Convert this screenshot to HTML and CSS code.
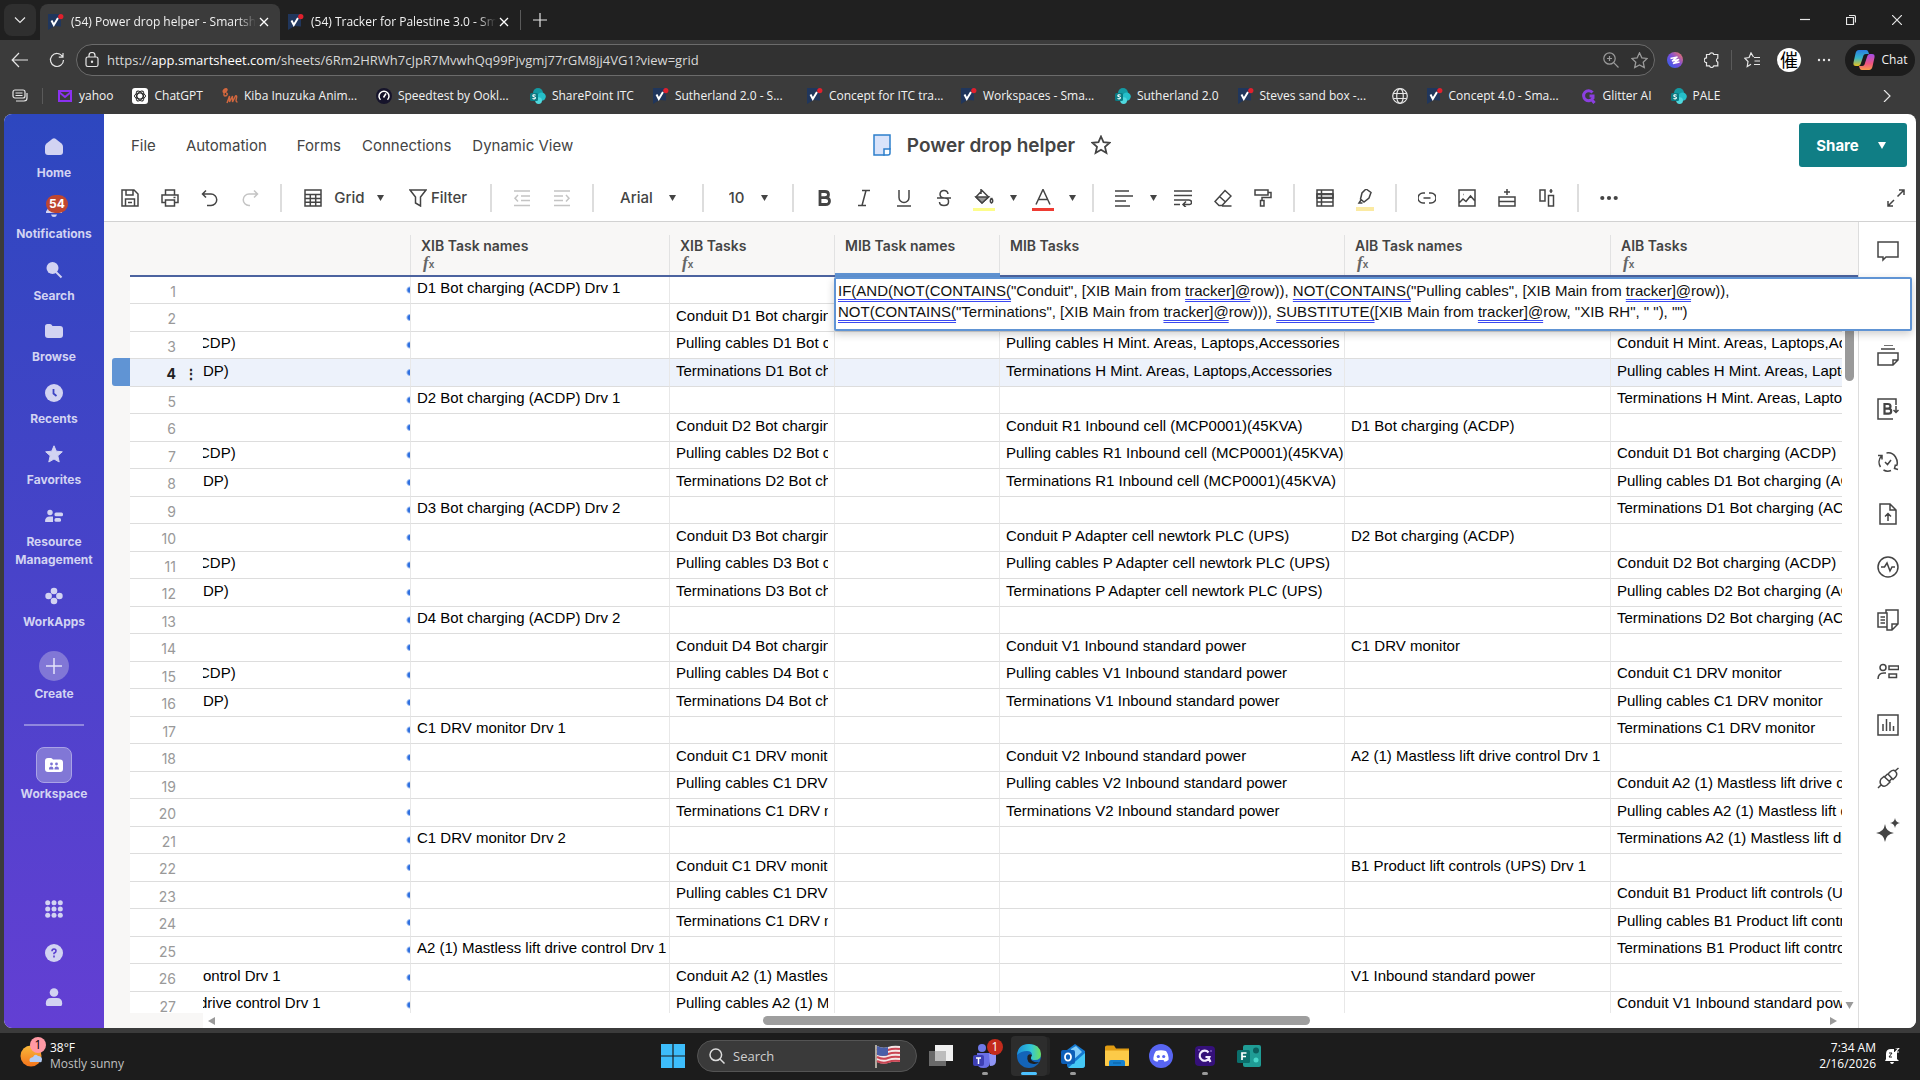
FILE: index.html
```html
<!DOCTYPE html>
<html lang="en">
<head>
    <meta charset="UTF-8">
    <title>(54) Power drop helper - Smartsheet.com</title>
    <link rel="stylesheet" href="styles.css">
</head>
<body>

<!-- shared icons -->
<svg class="defs" width="0" height="0">
    <symbol id="i-smart" viewBox="0 0 16 16">
        <path d="M0 0h13v12.5l-6.5-.5L0 16z" fill="#20365c"/>
        <path d="M3.5 6.5l2.3 4.5L10 4" fill="none" stroke="#fff" stroke-width="2"/>
        <circle cx="12.8" cy="2.6" r="2.6" fill="#e0202c"/>
    </symbol>
    <symbol id="i-sharepoint" viewBox="0 0 16 16">
        <circle cx="8" cy="5" r="5" fill="#149aa3"/>
        <circle cx="11.6" cy="8.6" r="4.2" fill="#25bfc9"/>
        <circle cx="8.6" cy="12.6" r="3.4" fill="#4fd8de"/>
        <rect x="0" y="5" width="8" height="8" rx="1.5" fill="#0b7b83"/>
        <path d="M5.6 7.2c-1-.7-3-.4-2.8.7.2 1 2.700.6 2.700 1.900 0 1.300-2 1.300-3 .6" fill="none" stroke="#fff" stroke-width="1.100"/>
    </symbol>
    <symbol id="i-caret" viewBox="0 0 8 8"><path d="M0 1h8L4 8z" fill="currentColor"/></symbol>
    <symbol id="i-close" viewBox="0 0 12 12"><path d="M2 2l8 8M10 2l-8 8" fill="none" stroke="currentColor" stroke-width="1.300"/></symbol>
</svg>

<header class="browser">
    <div class="tabstrip">
        <button class="tab-menu" aria-label="Tab actions"><svg viewBox="0 0 12 12" width="12" height="12"><path d="M1 3.500l5 5 5-5"/></svg></button>
        <div class="tab active">
            <svg class="fav"><use href="#i-smart"/></svg>
            <span class="tab-title">(54) Power drop helper - Smartshe</span>
            <button aria-label="Close tab"><svg width="12" height="12"><use href="#i-close"/></svg></button>
        </div>
        <div class="tab">
            <svg class="fav"><use href="#i-smart"/></svg>
            <span class="tab-title">(54) Tracker for Palestine 3.0 - Sma</span>
            <button aria-label="Close tab"><svg width="12" height="12"><use href="#i-close"/></svg></button>
        </div>
        <button class="new-tab" aria-label="New tab"><svg viewBox="0 0 14 14" width="14" height="14"><path d="M7 0v14M0 7h14"/></svg></button>
        <div class="win-buttons">
            <button aria-label="Minimize"><svg viewBox="0 0 10 10" width="10" height="10"><path d="M0 4.500h10"/></svg></button>
            <button aria-label="Restore"><svg viewBox="0 0 10 10" width="10" height="10"><path d="M.5 2.500h7v7h-7zM3 .5h5a1.500 1.500 0 0 1 1.500 1.500v5.500"/></svg></button>
            <button aria-label="Close"><svg viewBox="0 0 10 10" width="10" height="10"><path d="M0 0l10 10M10 0L0 10"/></svg></button>
        </div>
    </div>

    <div class="navbar">
        <button aria-label="Back"><svg viewBox="0 0 18 18" width="18" height="18"><path d="M17 9H1.500M8 2L1.200 9 8 16"/></svg></button>
        <button aria-label="Refresh"><svg viewBox="0 0 16 16" width="16" height="16"><path d="M13.500 4.500A6.500 6.500 0 1 0 14.500 8M14 1v4.200H9.800"/></svg></button>
        <div class="address">
            <svg viewBox="0 0 14 16" width="14" height="16"><rect x="1" y="5" width="12" height="9.500" rx="1.800"/><path d="M4 5V3.500a3 3 0 0 1 6 0V5"/><circle cx="7" cy="9.800" r=".6"/></svg>
            <div class="url">https://<b>app.smartsheet.com</b>/sheets/6Rm2HRWh7cJpR7MvwhQq99Pjvgmj77rGM8jj4VG1?view=grid</div>
            <svg class="dim" viewBox="0 0 16 16" width="16" height="16"><circle cx="6.500" cy="6.500" r="5.700"/><path d="M10.700 10.700L15.500 15.500M6.500 4v5M4 6.500h5"/></svg>
            <svg class="dim" viewBox="0 0 16 16" width="17" height="17"><path d="M8 .8l2.200 4.700 5 .6-3.700 3.500 1 5.100L8 12.200l-4.500 2.500 1-5.100L.8 6.100l5-.6z"/></svg>
        </div>
        <button aria-label="Extension"><svg class="noline" viewBox="0 0 16 16" width="16" height="16"><defs><linearGradient id="ext" x1="0" x2="1" y1="1" y2="0"><stop offset="0" stop-color="#2563eb"/><stop offset=".5" stop-color="#7c4ddb"/><stop offset="1" stop-color="#ff7a59"/></linearGradient></defs><circle cx="8" cy="8" r="8" fill="url(#ext)"/><path d="M3.500 6.500L10.500 5 5 9l7-1.500L6 11.500l6.500-1.500" stroke="#fff" stroke-width="1.400"/></svg></button>
        <button class="puzzle" aria-label="Extensions"><svg viewBox="0 0 16 16" width="16" height="16"><path d="M5.500 2.500a2.200 2 0 0 1 4.300 0h4v3.800a2 2 0 0 0 0 3.800v3.800h-4a2.200 2 0 0 1-4.300 0h-3v-3.400a2.200 2.200 0 0 1 0-4.600V2.500z"/></svg></button>
        <button class="favs" aria-label="Favorites"><svg viewBox="0 0 16 16" width="16" height="16"><path d="M9.500 5L7 .9 5.100 5.500.8 6.200 4 9.500l-.8 5L7 12.300M10 5.500h6M10.500 9h5.500M10 12.500h6"/></svg></button>
        <button class="profile" aria-label="Profile"><span>催</span></button>
        <button class="more" aria-label="Settings"><svg class="dots" viewBox="0 0 14 4" width="14" height="4"><circle cx="2" cy="2" r="1.200"/><circle cx="7" cy="2" r="1.200"/><circle cx="12" cy="2" r="1.200"/></svg></button>
        <button class="chat"><svg class="noline" viewBox="0 0 22 20" width="22" height="20"><defs><linearGradient id="cpa" x1="0" x2="0" y1="0" y2="1"><stop offset="0" stop-color="#2a7de1"/><stop offset=".5" stop-color="#37b6c9"/><stop offset="1" stop-color="#e8c11c"/></linearGradient><linearGradient id="cpb" x1="0" x2="0" y1="0" y2="1"><stop offset="0" stop-color="#a34de8"/><stop offset=".6" stop-color="#f0557f"/><stop offset="1" stop-color="#f99b4a"/></linearGradient></defs><path d="M6 0h7c2 0 2.500 2 3 4h-3c-2 0-2.500 1-3 3l-2 6c-.5 2-1.500 3-3 3H3c-2 0-3-1-2.500-3.500l2-9C3 1.500 4 0 6 0z" fill="url(#cpa)"/><path d="M16 20H9c-2 0-2.500-2-3-4h3c2 0 2.500-1 3-3l2-6c.5-2 1.500-3 3-3h2c2 0 3 1 2.500 3.500l-2 9C19 18.500 18 20 16 20z" fill="url(#cpb)"/></svg>Chat</button>
    </div>

    <nav class="bookmarks">
        <button aria-label="Workspaces"><svg viewBox="0 0 16 14" width="16" height="14"><rect x="1" y="1" width="12" height="8" rx="2"/><path d="M3.500 4h7M3.500 6.500h7M15 4v5a3 3 0 0 1-3 3H4"/></svg></button>
        <i></i>
        <a href="#"><svg viewBox="0 0 16 16"><rect x="2" y="3" width="12" height="10" fill="none" stroke="#8b31f0" stroke-width="2"/><path d="M2 4l6 5 6-5" fill="none" stroke="#8b31f0" stroke-width="2"/></svg>yahoo</a>
        <a href="#"><svg viewBox="0 0 16 16"><rect width="16" height="16" rx="3" fill="#fff"/><g fill="none" stroke="#222" stroke-width="1"><ellipse cx="8" cy="8" rx="5.500" ry="3"/><ellipse cx="8" cy="8" rx="5.500" ry="3" transform="rotate(60 8 8)"/><ellipse cx="8" cy="8" rx="5.500" ry="3" transform="rotate(120 8 8)"/></g></svg>ChatGPT</a>
        <a class="long" href="#"><svg viewBox="0 0 16 16"><path d="M5 1C2 0 0 4 2 4.500S6 1 4.500 1 .5 8 3 8s3-3 1-3M5 15l2.500-7v6l3-6v6l3-6c1-.5 1.500 0 1 2s-1 4 1 4" fill="none" stroke="#d2673e" stroke-width="1.400"/></svg>Kiba Inuzuka Anim...</a>
        <a class="long" href="#"><svg viewBox="0 0 16 16"><circle cx="8" cy="8" r="8" fill="#16142b"/><path d="M4.500 11.800a5 5 0 1 1 7 0M7.500 9.500l2.500-4" fill="none" stroke="#fff" stroke-width="1.500"/></svg>Speedtest by Ookl...</a>
        <a href="#"><svg><use href="#i-sharepoint"/></svg>SharePoint ITC</a>
        <a class="long" href="#"><svg><use href="#i-smart"/></svg>Sutherland 2.0 - S...</a>
        <a class="long" href="#"><svg><use href="#i-smart"/></svg>Concept for ITC tra...</a>
        <a class="long" href="#"><svg><use href="#i-smart"/></svg>Workspaces - Sma...</a>
        <a href="#"><svg><use href="#i-sharepoint"/></svg>Sutherland 2.0</a>
        <a class="long" href="#"><svg><use href="#i-smart"/></svg>Steves sand box -...</a>
        <a class="globe" href="#" aria-label="Bookmark"><svg viewBox="0 0 16 16"><g fill="none" stroke="#e6e6e6"><circle cx="8" cy="8" r="7.300"/><ellipse cx="8" cy="8" rx="3.300" ry="7.300"/><path d="M1.500 5.500h13M1.500 10.500h13"/></g></svg></a>
        <a class="long" href="#"><svg><use href="#i-smart"/></svg>Concept 4.0 - Sma...</a>
        <a href="#"><svg viewBox="0 0 16 16"><path d="M11.500 4.500A5 5 0 1 0 12 10V8H8.500M11 12l2.500 3" fill="none" stroke="#8b3fe0" stroke-width="3"/></svg>Glitter AI</a>
        <a href="#"><svg><use href="#i-sharepoint"/></svg>PALE</a>
        <button class="overflow" aria-label="More bookmarks"><svg viewBox="0 0 8 12" width="8" height="12"><path d="M1 0l6 6-6 6"/></svg></button>
    </nav>
</header>

<div class="page">
    <aside class="sidebar">
        <nav class="side-main">
            <a href="#"><svg viewBox="0 0 18 18"><path d="M7.500.8L1.500 5.500Q0 6.800 0 8.500V14q0 3 3 3h12q3 0 3-3V8.500q0-1.700-1.500-3L10.500.8q-1.500-1-3 0z"/></svg>Home</a>
            <a href="#"><svg viewBox="0 0 18 18"><path d="M1 12.500l2-3V5h12v4.500l2 3V14H1zM6 15.500h6q-.5 2.500-3 2.500t-3-2.500z"/></svg><em>54</em>Notifications</a>
            <a href="#"><svg viewBox="0 0 18 18"><circle cx="7.500" cy="7" r="6"/><path d="M11 11l5.500 5.500" stroke="#d2d3f2" stroke-width="2"/></svg>Search</a>
            <a href="#"><svg viewBox="0 0 18 18"><path d="M0 4.500Q0 2 2.500 2H5q1.500 0 2.500 2h7.500q3 0 3 3v6q0 3-3 3H3q-3 0-3-3z"/></svg>Browse</a>
            <a href="#"><svg viewBox="0 0 18 18"><circle cx="9" cy="9" r="9"/><path d="M8.500 5v4.500l3 2.500" fill="none" stroke="#3c43c3" stroke-width="1.800"/></svg>Recents</a>
            <a href="#"><svg viewBox="0 0 18 18"><path d="M9 .8l2.300 5.400 6 .6-4.500 4 1.400 6.200L9 14l-5.200 3 1.400-6.200-4.500-4 6-.6z" stroke="#d2d3f2" stroke-linejoin="round"/></svg>Favorites</a>
        </nav>
        <nav class="side-more">
            <a class="two" href="#"><svg viewBox="0 0 18 18"><circle cx="5" cy="5.500" r="2.700"/><path d="M0 14.500q0-5 5-5h3v5.500H.5z"/><rect x="9.500" y="5.500" width="8.500" height="3.800" rx="1.500"/><rect x="9.500" y="11" width="6.500" height="3.800" rx="1.500"/></svg>Resource Management</a>
            <a href="#"><svg viewBox="0 0 18 18"><circle cx="9" cy="4" r="3.300"/><circle cx="9" cy="14" r="3.300"/><circle cx="3.600" cy="9" r="3.300"/><circle cx="14.400" cy="9" r="3.300"/></svg>WorkApps</a>
            <a class="create" href="#"><span><svg viewBox="0 0 18 18"><path d="M9 1v16M1 9h16" stroke="#e4e4fa" stroke-width="1.500"/></svg></span>Create</a>
        </nav>
        <hr>
        <nav class="side-more">
            <a class="workspace" href="#"><span><svg viewBox="0 0 18 18"><path fill="#fff" d="M0 5q0-3 3-3h3q1 0 2 1.500h7q3 0 3 3V13q0 3-3 3H3q-3 0-3-3z"/><g fill="#7b72d4"><circle cx="6.500" cy="8" r="1.400"/><circle cx="11.500" cy="8" r="1.400"/><path d="M4 13.500v-1q0-2 2.200-2t2.200 2v1zM9.500 13.500v-1q0-2 2.200-2t2.200 2v1z"/></g></svg></span>Workspace</a>
        </nav>
        <nav class="side-bottom">
            <a href="#" aria-label="Launcher"><svg viewBox="0 0 18 18"><g><circle cx="2.700" cy="2.700" r="2.500"/><circle cx="9" cy="2.700" r="2.500"/><circle cx="15.300" cy="2.700" r="2.500"/><circle cx="2.700" cy="9" r="2.500"/><circle cx="9" cy="9" r="2.500"/><circle cx="15.300" cy="9" r="2.500"/><circle cx="2.700" cy="15.300" r="2.500"/><circle cx="9" cy="15.300" r="2.500"/><circle cx="15.300" cy="15.300" r="2.500"/></g></svg></a>
            <a href="#" aria-label="Help"><svg viewBox="0 0 18 18"><circle cx="9" cy="9" r="9"/><path d="M7 7.300q0-2.300 2-2.300t2 2q0 1.300-2 2.300v1M9 11.600v1.800" fill="none" stroke="#5b40cf" stroke-width="1.600"/></svg></a>
            <a href="#" aria-label="Account"><svg viewBox="0 0 18 18"><circle cx="9" cy="4.500" r="4.300"/><path d="M.8 15.500Q.8 10 6 10h6q5.200 0 5.200 5.500 0 2.500-1.500 2.500H2.300Q.8 18 .8 15.500z"/></svg></a>
        </nav>
    </aside>

    <main class="sheet">
        <div class="menubar">
            <nav>
                <button class="wide">File</button>
                <button class="wide">Automation</button>
                <button>Forms</button>
                <button>Connections</button>
                <button>Dynamic View</button>
            </nav>
            <h1>
                <svg viewBox="0 0 18 22" width="18" height="22"><path d="M1 1h16v14l-6 6H1z" fill="#d9e3fa" stroke="#2d7fcb" stroke-width="1.500"/><path d="M17 15h-6v6l4 0q2 0 2-2z" fill="#fff" stroke="#2d7fcb" stroke-width="1.500"/></svg>
                Power drop helper
                <svg class="star" viewBox="0 0 20 20" width="20" height="20"><path d="M10 1.500l2.500 5.700 6.200.6-4.700 4.100 1.400 6.100L10 14.800 4.600 18 6 11.900 1.300 7.800l6.200-.6z"/></svg>
            </h1>
            <button class="share">Share<svg width="8" height="8"><use href="#i-caret"/></svg></button>
        </div>

        <div class="toolbar">
            <button aria-label="Save"><svg viewBox="0 0 18 18"><path d="M1 1h12l4 4v12H1zM4.500 17v-7h9v7M5 1v5h7V1M7 13.500h4"/></svg></button>
            <button aria-label="Print"><svg viewBox="0 0 18 18"><path d="M4.500 6V1h9v5M4 13.500H1V6h16v7.500h-3M4.500 11h9v6h-9zM12.500 8.500h2"/></svg></button>
            <button aria-label="Undo"><svg viewBox="0 0 18 18"><path d="M5 1.500L1.500 5 5 8.500M1.500 5H10a5.500 5.500 0 0 1 0 11.500H6"/></svg></button>
            <button class="off" aria-label="Redo"><svg viewBox="0 0 18 18"><path d="M13 1.500L16.500 5 13 8.500M16.500 5H8a5.500 5.500 0 0 0 0 11.500h1"/></svg></button>
            <i></i>
            <button class="view"><svg viewBox="0 0 18 18"><path d="M1 1h16v16H1zM1 5.500h16M1 9.500h16M1 13.300h16M6.300 5.500V17M11.700 5.500V17"/></svg>Grid<svg class="caret"><use href="#i-caret"/></svg></button>
            <button class="filter"><svg viewBox="0 0 18 18"><path d="M1 1h16l-5.500 7v9L6.500 14V8z"/></svg>Filter</button>
            <i></i>
            <button class="off" aria-label="Outdent"><svg viewBox="0 0 18 18"><path d="M1 2h16M8 7h9M8 11.500h9M1 16.500h16M5 6L2 9.200l3 3.300"/></svg></button>
            <button class="off" aria-label="Indent"><svg viewBox="0 0 18 18"><path d="M1 2h16M1 7h9M1 11.500h9M1 16.500h16M13 6l3 3.200-3 3.300"/></svg></button>
            <i></i>
            <label class="font"><select aria-label="Font"><option>Arial</option></select><svg class="caret"><use href="#i-caret"/></svg></label>
            <i></i>
            <label class="size"><select aria-label="Size"><option>10</option></select><svg class="caret"><use href="#i-caret"/></svg></label>
            <i></i>
            <button aria-label="Bold"><svg viewBox="0 0 18 18"><path stroke-width="2.800" d="M5 2.500h5q3.500 0 3.500 3T10 8.700H5zM5 8.700h5.500q4 0 4 3.400t-4 3.400H5z"/></svg></button>
            <button aria-label="Italic"><svg viewBox="0 0 18 18"><path d="M7 1.500h8M3 16.500h8M11 1.500L7 16.500"/></svg></button>
            <button aria-label="Underline"><svg viewBox="0 0 18 18"><path d="M4 1v7.500a5 5 0 0 0 10 0V1M2 17h14"/></svg></button>
            <button aria-label="Strikethrough"><svg viewBox="0 0 18 18"><path d="M13 5q-.5-3.500-4-3.500T5 5q0 4 4.500 4t4 4q0 3.500-4.500 3.500T4.500 13M2 9h14"/></svg></button>
            <button class="split" aria-label="Background color"><svg viewBox="0 0 22 22"><path d="M8 0v5M9 1.500l6.500 6.500L9 14 3 8zM18.500 9q2.500 3.500 0 5-2.500-1.500 0-5"/><path d="M3 8h12.500L9 14z" fill="#999"/><path d="M0 20.500h22" stroke="#fdfd8b" stroke-width="3"/></svg></button>
            <button class="drop" aria-label="Pick background"><svg class="caret"><use href="#i-caret"/></svg></button>
            <button class="split" aria-label="Text color"><svg viewBox="0 0 22 22"><path d="M4 15.500L11 .5l7 15M6.500 10.500h9"/><path d="M0 20.500h22" stroke="#ee3b32" stroke-width="3"/></svg></button>
            <button class="drop" aria-label="Pick text color"><svg class="caret"><use href="#i-caret"/></svg></button>
            <i></i>
            <button aria-label="Align"><svg viewBox="0 0 18 18"><path d="M0 2h14M0 7h18M0 12h11M0 17h15"/></svg></button>
            <button class="drop" aria-label="Pick alignment"><svg class="caret"><use href="#i-caret"/></svg></button>
            <button aria-label="Wrap text"><svg viewBox="0 0 18 18"><path d="M0 2h18M0 6.500h18M0 11h15q2.500 0 2.500 2.300T15 15.500H9.500M0 15.500h6M12 12.500l-3 3 3 3"/></svg></button>
            <button aria-label="Clear format"><svg viewBox="0 0 18 18"><path d="M11 1.500l6 5.500-9 9.500H5L1 12.500zM5.500 7.500l6 5.500M8 17h9.500"/></svg></button>
            <button aria-label="Format painter"><svg viewBox="0 0 18 18"><path d="M1 1h13v5H1zM14 3.500h3V8.500H8v3M6.500 11.500h3.500V17H6.500z"/></svg></button>
            <i></i>
            <button aria-label="Conditional formatting"><svg viewBox="0 0 18 18"><path d="M1 5h16v4H1z" fill="#ccc"/><path d="M1 1h16v16H1zM1 5h16M1 9h16M1 13h16M5.500 1v16"/></svg></button>
            <button class="split" aria-label="Highlight changes"><svg viewBox="0 0 22 22"><path d="M12 0l5 3.500-2 5.500-5 4-3.500-3 1.500-6zM7 11L5 14h3.500"/><path d="M2 20h18" stroke="#fbeaa2" stroke-width="4"/></svg></button>
            <i></i>
            <button aria-label="Hyperlink"><svg viewBox="0 0 18 18"><path d="M7 4H5a5 5 0 0 0 0 10h2M11 4h2a5 5 0 0 1 0 10h-2M5.500 9h7"/></svg></button>
            <button aria-label="Insert image"><svg viewBox="0 0 18 18"><path d="M1 1h16v16H1zM1 14l4-4 3 2.500L12.500 7l4.500 5M5.500 5.500h.5"/></svg></button>
            <button aria-label="Insert row"><svg viewBox="0 0 18 18"><path d="M1 8h16v9H1zM1 12.500h16M9 0v6M6 3h6"/></svg></button>
            <button aria-label="Insert column"><svg viewBox="0 0 18 18"><path d="M2 1h5v11H2zM10.500 6.500h5v10.500h-5zM13 0v4M11.500 2h3"/></svg></button>
            <i></i>
            <button aria-label="More"><svg class="dots" viewBox="0 0 18 18"><circle cx="2.300" cy="9" r="2.100"/><circle cx="9" cy="9" r="2.100"/><circle cx="15.700" cy="9" r="2.100"/></svg></button>
            <button class="expand" aria-label="Full screen"><svg viewBox="0 0 18 18"><path d="M10.500 7.500l6-6M12 1h5v5M7 11l-5.500 5.500M1 12v5h5"/></svg></button>
        </div>

        <div class="work">
            <div class="grid-wrap">
                <div class="row-tag"></div>
                <div class="grid-scroll">
                    <table>
                        <colgroup><col class="c-num"><col class="c-main"><col class="c-xn"><col class="c-xt"><col class="c-mn"><col class="c-mt"><col class="c-an"><col></colgroup>
                        <thead>
                            <tr><th></th><th></th><th>XIB Task names<span><i>f</i>x</span></th><th>XIB Tasks<span><i>f</i>x</span></th><th class="sel">MIB Task names</th><th>MIB Tasks</th><th>AIB Task names<span><i>f</i>x</span></th><th>AIB Tasks<span><i>f</i>x</span></th></tr>
                        </thead>
                        <tbody>
                            <tr><td>1</td><td></td><td>D1 Bot charging (ACDP) Drv 1</td><td></td><td></td><td></td><td></td><td></td></tr>
                            <tr><td>2</td><td></td><td></td><td>Conduit D1 Bot chargin</td><td></td><td></td><td></td><td></td></tr>
                            <tr><td>3</td><td class="cut">CDP)</td><td></td><td>Pulling cables D1 Bot c</td><td></td><td>Pulling cables H Mint. Areas, Laptops,Accessories</td><td></td><td>Conduit H Mint. Areas, Laptops,Ac</td></tr>
                            <tr class="current"><td>4</td><td>DP)</td><td></td><td>Terminations D1 Bot ch</td><td></td><td>Terminations H Mint. Areas, Laptops,Accessories</td><td></td><td>Pulling cables H Mint. Areas, Lapto</td></tr>
                            <tr><td>5</td><td></td><td>D2 Bot charging (ACDP) Drv 1</td><td></td><td></td><td></td><td></td><td>Terminations H Mint. Areas, Laptop</td></tr>
                            <tr><td>6</td><td></td><td></td><td>Conduit D2 Bot chargin</td><td></td><td>Conduit R1 Inbound cell (MCP0001)(45KVA)</td><td>D1 Bot charging (ACDP)</td><td></td></tr>
                            <tr><td>7</td><td class="cut">CDP)</td><td></td><td>Pulling cables D2 Bot c</td><td></td><td>Pulling cables R1 Inbound cell (MCP0001)(45KVA)</td><td></td><td>Conduit D1 Bot charging (ACDP)</td></tr>
                            <tr><td>8</td><td>DP)</td><td></td><td>Terminations D2 Bot ch</td><td></td><td>Terminations R1 Inbound cell (MCP0001)(45KVA)</td><td></td><td>Pulling cables D1 Bot charging (AC</td></tr>
                            <tr><td>9</td><td></td><td>D3 Bot charging (ACDP) Drv 2</td><td></td><td></td><td></td><td></td><td>Terminations D1 Bot charging (ACD</td></tr>
                            <tr><td>10</td><td></td><td></td><td>Conduit D3 Bot chargin</td><td></td><td>Conduit P Adapter cell newtork PLC (UPS)</td><td>D2 Bot charging (ACDP)</td><td></td></tr>
                            <tr><td>11</td><td class="cut">CDP)</td><td></td><td>Pulling cables D3 Bot c</td><td></td><td>Pulling cables P Adapter cell newtork PLC (UPS)</td><td></td><td>Conduit D2 Bot charging (ACDP)</td></tr>
                            <tr><td>12</td><td>DP)</td><td></td><td>Terminations D3 Bot ch</td><td></td><td>Terminations P Adapter cell newtork PLC (UPS)</td><td></td><td>Pulling cables D2 Bot charging (AC</td></tr>
                            <tr><td>13</td><td></td><td>D4 Bot charging (ACDP) Drv 2</td><td></td><td></td><td></td><td></td><td>Terminations D2 Bot charging (ACD</td></tr>
                            <tr><td>14</td><td></td><td></td><td>Conduit D4 Bot chargin</td><td></td><td>Conduit V1 Inbound standard power</td><td>C1 DRV monitor</td><td></td></tr>
                            <tr><td>15</td><td class="cut">CDP)</td><td></td><td>Pulling cables D4 Bot c</td><td></td><td>Pulling cables V1 Inbound standard power</td><td></td><td>Conduit C1 DRV monitor</td></tr>
                            <tr><td>16</td><td>DP)</td><td></td><td>Terminations D4 Bot ch</td><td></td><td>Terminations V1 Inbound standard power</td><td></td><td>Pulling cables C1 DRV monitor</td></tr>
                            <tr><td>17</td><td></td><td>C1 DRV monitor Drv 1</td><td></td><td></td><td></td><td></td><td>Terminations C1 DRV monitor</td></tr>
                            <tr><td>18</td><td></td><td></td><td>Conduit C1 DRV monito</td><td></td><td>Conduit V2 Inbound standard power</td><td>A2 (1) Mastless lift drive control Drv 1</td><td></td></tr>
                            <tr><td>19</td><td></td><td></td><td>Pulling cables C1 DRV</td><td></td><td>Pulling cables V2 Inbound standard power</td><td></td><td>Conduit A2 (1) Mastless lift drive co</td></tr>
                            <tr><td>20</td><td></td><td></td><td>Terminations C1 DRV m</td><td></td><td>Terminations V2 Inbound standard power</td><td></td><td>Pulling cables A2 (1) Mastless lift d</td></tr>
                            <tr><td>21</td><td></td><td>C1 DRV monitor Drv 2</td><td></td><td></td><td></td><td></td><td>Terminations A2 (1) Mastless lift dr</td></tr>
                            <tr><td>22</td><td></td><td></td><td>Conduit C1 DRV monito</td><td></td><td></td><td>B1 Product lift controls (UPS) Drv 1</td><td></td></tr>
                            <tr><td>23</td><td></td><td></td><td>Pulling cables C1 DRV</td><td></td><td></td><td></td><td>Conduit B1 Product lift controls (UP</td></tr>
                            <tr><td>24</td><td></td><td></td><td>Terminations C1 DRV m</td><td></td><td></td><td></td><td>Pulling cables B1 Product lift contro</td></tr>
                            <tr><td>25</td><td></td><td>A2 (1) Mastless lift drive control Drv 1</td><td></td><td></td><td></td><td></td><td>Terminations B1 Product lift contro</td></tr>
                            <tr><td>26</td><td>ontrol Drv 1</td><td></td><td>Conduit A2 (1) Mastless</td><td></td><td></td><td>V1 Inbound standard power</td><td></td></tr>
                            <tr><td>27</td><td class="cut">drive control Drv 1</td><td></td><td>Pulling cables A2 (1) M</td><td></td><td></td><td></td><td>Conduit V1 Inbound standard powe</td></tr>
                        </tbody>
                    </table>
                </div>
                <div class="vbar"><span></span><svg width="9" height="8"><use href="#i-caret"/></svg></div>
                <div class="hbar"><svg viewBox="0 0 7 8" width="7" height="8"><path d="M7 0v8L0 4z"/></svg><div class="track"><span></span></div><svg viewBox="0 0 7 8" width="7" height="8"><path d="M0 0v8l7-4z"/></svg></div>
            </div>

            <div class="editor" role="textbox" contenteditable="true" spellcheck="false" aria-label="Cell formula"><u>IF(AND(NOT(CONTAINS(</u>"Conduit", [XIB Main from <u>tracker]@</u>row)), <u>NOT(CONTAINS(</u>"Pulling cables", [XIB Main from <u>tracker]@</u>row)),<br><u>NOT(CONTAINS(</u>"Terminations", [XIB Main from <u>tracker]@</u>row))), <u>SUBSTITUTE(</u>[XIB Main from <u>tracker]@</u>row, "XIB RH", " "), "")</div>

            <aside class="rail">
                <button aria-label="Conversations"><svg viewBox="0 0 22 22"><path d="M1 2h20v15H9l-3 3v-3H1z"/></svg></button>
                <button aria-label="Attachments"></button>
                <button aria-label="Proofs"><svg viewBox="0 0 22 22"><path d="M7 0h9M4 4h14M1 8h20v7l-5 5H1zM21 15h-5v5"/></svg></button>
                <button aria-label="Brandfolder"><svg viewBox="0 0 22 22"><path d="M19 7V1H1v20h15M19 8v6M16.500 12l2.500 2.500L21.500 12"/><path stroke-width="2.200" d="M7.500 6h3.300q2.700 0 2.700 2.300t-2.700 2.400H7.500zM7.500 10.700h4q2.700 0 2.700 2.500t-2.700 2.500h-4z"/></svg></button>
                <button aria-label="Update requests"><svg viewBox="0 0 22 22"><path d="M3.500 16a9 9 0 0 1 1-11M9.500 2q6-1 9 4t1 9M14 19.500q-4 1.500-7.500-.5M1 4.500h4v4M21 18.500l-3.500-1 1-4M8 11l2.500 2.500L14 9"/></svg></button>
                <button aria-label="Publish"><svg viewBox="0 0 22 22"><path d="M3 1h10l6 6v14H3zM13 1v6h6M11 18v-7M8 13.500l3-3 3 3"/></svg></button>
                <button aria-label="Activity log"><svg viewBox="0 0 22 22"><circle cx="11" cy="11" r="10"/><path d="M4 11h3.500L10 7l3 8 2-4h3"/></svg></button>
                <button aria-label="Summary"><svg viewBox="0 0 22 22"><path d="M9 4V1h12v14l-6 6h-5v-3M21 15h-6v6M1 4h9v14H1zM3.500 8H8M3.500 11H8M3.500 14H8"/></svg></button>
                <button aria-label="Resources"><svg viewBox="0 0 22 22"><circle cx="6" cy="6.500" r="3"/><path d="M1 18q0-6 6-6h2M12 5h9.500v3.500H12zM12 13h7.500v3.500H12z"/></svg></button>
                <button aria-label="Charts"><svg viewBox="0 0 22 22"><path d="M1 1h20v20H1zM6 10v7M9.500 5v12M13 8v9M16.500 12v5"/></svg></button>
                <button aria-label="Integrations"><svg viewBox="0 0 22 22"><path d="M1 21l3.500-3.500M21.500 1L18 4M4 12l3-2.500 6 5.500-3 3q-3 2.500-5.500 0T4 12zM11 7l2-2q3-3 5.500-.5t0 5.500l-2.500 2.500zM8 9.500l2.500-2.500M12.500 14l2.500-2.500"/></svg></button>
                <button aria-label="AI"><svg class="fill" viewBox="0 0 24 24" width="24" height="24"><path d="M9 6q1 8 9 9-8 1-9 9-1-8-9-9 8-1 9-9zM19 0q.7 4.600 5 5-4.300.7-5 5-.7-4.300-5-5 4.300-.4 5-5z"/></svg></button>
            </aside>
        </div>
    </main>
</div>

<footer class="taskbar">
    <button class="weather">
        <svg viewBox="0 0 26 34" width="26" height="34"><defs><linearGradient id="sun" x1="0" x2="0" y1="0" y2="1"><stop offset="0" stop-color="#f9b93a"/><stop offset="1" stop-color="#f4741c"/></linearGradient></defs><circle cx="11" cy="17" r="10.500" fill="url(#sun)"/><path d="M10 23q-2-4 3-5 2-4 5-1 4 0 4 3.500T19 23z" fill="#b4cdf5"/></svg>
        <em>1</em>
        <span>38°F<small>Mostly sunny</small></span>
    </button>
    <div class="apps">
        <button class="start" aria-label="Start"><svg viewBox="0 0 24 24" width="24" height="24"><path d="M0 0h11.400v11.400H0zM12.600 0H24v11.400H12.600zM0 12.600h11.400V24H0zM12.600 12.600H24V24H12.600z" fill="#3dbdfb"/></svg></button>
        <label class="search">
            <svg viewBox="0 0 16 16" width="16" height="16"><circle cx="6.800" cy="6.800" r="5.800"/><path d="M11 11l4.500 4.500"/></svg>
            <input type="text" placeholder="Search" aria-label="Search">
            <svg class="flag" viewBox="0 0 26 24" width="26" height="24"><path d="M1 1v23" stroke="#d9d2c4" stroke-width="1.500"/><path d="M2 2q6 3 11 1t12-1v16q-7-1-12 1T2 18z" fill="#f3e6e6"/><path d="M2 5q6 3 11 1t12-1M2 9q6 3 11 1t12-1M2 13q6 3 11 1t12-1M2 17q6 3 11 1t12-1" fill="none" stroke="#c94452" stroke-width="2"/><path d="M2 2q6 3 11 1v8q-5 2-11 0z" fill="#4a5ea8"/></svg>
        </label>
        <button aria-label="Task view"><svg viewBox="0 0 24 24" width="24" height="24"><rect x="0" y="7" width="17" height="15" fill="#6a6a6a"/><rect x="6" y="1" width="18" height="16" fill="#f0f0f0"/><rect x="6" y="7" width="11" height="10" fill="#bdbdbd"/></svg></button>
        <button class="running" aria-label="Teams"><svg viewBox="0 0 24 24" width="24" height="24"><circle cx="9" cy="4" r="4" fill="#6f79e8"/><path d="M4 9h13v9q0 6-6.500 6T4 18z" fill="#6a6fe6"/><path d="M16 10h7v7q0 5-6 5z" fill="#8f94f5"/><rect x="0" y="11" width="11" height="11" rx="2" fill="#3d3fb3"/><path d="M3 14h5M5.500 14v6" stroke="#fff" stroke-width="1.500"/></svg><em>1</em></button>
        <button class="running active" aria-label="Edge"><svg viewBox="0 0 24 24" width="24" height="24"><defs><linearGradient id="edge" x1="0" x2="1"><stop offset="0" stop-color="#1a8fdd"/><stop offset=".6" stop-color="#33c7d6"/><stop offset="1" stop-color="#6fe05a"/></linearGradient></defs><circle cx="12" cy="12" r="12" fill="#1364b8"/><path d="M0 11Q1 0 12 0t12 10q0 6-6 6-4 0-4-2t1-3q0-4-5-4-6 0-10 4z" fill="url(#edge)"/><path d="M15 11q-3-2-4.500 1-1.500 7 6 8 3 .4 6-2-4 1-7-1t-.5-6z" fill="#202020"/></svg></button>
        <button class="running" aria-label="Outlook"><svg viewBox="0 0 24 24" width="24" height="24"><path d="M6 6l8-6 10 7v14q0 3-3 3H9q-3 0-3-3z" fill="#1479d1"/><path d="M10 5l5-3 6 6-9 8z" fill="#83cdfa"/><path d="M24 9v12q0 3-3 3H7z" fill="#45c8f5"/><rect x="0" y="6" width="14" height="14" rx="2" fill="#0d5fb8"/><ellipse cx="7" cy="13" rx="3" ry="3.700" fill="none" stroke="#fff" stroke-width="1.800"/></svg></button>
        <button aria-label="File Explorer"><svg viewBox="0 0 24 24" width="24" height="24"><path d="M0 3q0-1.500 2-1.500h7l2 3h13V22H0z" fill="#e09b12"/><path d="M0 6.500h24V20q0 2-2 2H2q-2 0-2-2z" fill="#fcca48"/><path d="M4 22v-4q0-2 2-2h12q2 0 2 2v4z" fill="#1580cf"/><path d="M8 19h8" stroke="#0b5c9c"/></svg></button>
        <button aria-label="Discord"><svg viewBox="0 0 24 24" width="24" height="24"><circle cx="12" cy="12" r="12" fill="#5865f2"/><path d="M7 7q5-1.500 10 0 3 4 2.500 9-2 1.500-4 1.700l-1-1.700h-5l-1 1.700q-2-.2-4-1.700Q4 11 7 7z" fill="#fff"/><circle cx="9.300" cy="12.500" r="1.600" fill="#5865f2"/><circle cx="14.700" cy="12.500" r="1.600" fill="#5865f2"/></svg></button>
        <button class="running" aria-label="Glitter"><svg viewBox="0 0 24 24" width="24" height="24"><rect x="2" y="2" width="20" height="20" rx="4" fill="#35107a"/><path d="M15.500 8.500A5 5 0 1 0 16.500 13H12.500M16 15l1.500 3" fill="none" stroke="#f3ecff" stroke-width="2.200"/><circle cx="6" cy="6" r=".8" fill="#b18cf2"/><circle cx="18" cy="7" r=".8" fill="#b18cf2"/></svg></button>
        <button aria-label="Forms"><svg viewBox="0 0 24 24" width="24" height="24"><rect x="6" y="1" width="18" height="22" rx="2" fill="#1f9c95"/><circle cx="19" cy="6.500" r="3" fill="#0c5f5e"/><circle cx="19" cy="16" r="2.500" fill="#48d6c9"/><rect y="6" width="13" height="13" rx="1.500" fill="#0b6f6c"/><path d="M5 16V9h4.500M5 12.500h4" fill="none" stroke="#fff" stroke-width="1.700"/></svg></button>
    </div>
    <div class="tray">
        <time>7:34 AM<br>2/16/2026</time>
        <svg viewBox="0 0 16 16" width="16" height="16"><path d="M2 11V6q0-5 5-5h3v3h3v7l2 2H1zM6 14h4q-.5 2-2 2t-2-2z" fill="#fff"/><path d="M11.500 0h3.500l-3.500 4H15" fill="none" stroke="#fff" stroke-width="1.200"/><path d="M5 5h3L5 9h3" fill="none" stroke="#1c1c1c"/></svg>
    </div>
</footer>

</body>
</html>
```
FILE: styles.css
```css
* {
    box-sizing: border-box;
}

body {
    margin: 0;
    height: 100vh;
    display: flex;
    flex-direction: column;
    overflow: hidden;
    background: #3b3b3b;
    font-family: Inter, "Liberation Sans", sans-serif;
    color: #444;
}

button {
    border: 0;
    padding: 0;
    background: none;
    color: inherit;
    font: inherit;
    display: flex;
    align-items: center;
    justify-content: center;
}

a {
    color: inherit;
    text-decoration: none;
}

svg {
    flex: none;
}

.defs {
    position: absolute;
}

/* ---- browser ---- */
.browser {
    flex: none;
    height: 114px;
    color: #f2f2f2;
    font: 12px/16px "Open Sans", sans-serif;
}

.browser svg {
    fill: none;
    stroke: #e6e6e6;
    stroke-width: 1.2;
}

.browser .noline, .browser .fav, .bookmarks a svg {
    stroke: none;
}

.tabstrip {
    display: flex;
    height: 40px;
    background: #202020;
    padding-left: 4px;
}

.tab-menu {
    width: 32px;
    height: 32px;
    margin: 4px 4px 0 0;
    border-radius: 8px;
    background: #2f2f2f;
}

.tab {
    display: flex;
    align-items: center;
    width: 240px;
    height: 36px;
    margin-top: 4px;
    padding: 0 8px;
}

.tab.active {
    border-radius: 8px 8px 0 0;
    background: #3b3b3b;
}

.fav {
    width: 16px;
    height: 16px;
}

.tab-title {
    flex: 1;
    margin-left: 7px;
    overflow: hidden;
    white-space: nowrap;
    -webkit-mask-image: linear-gradient(90deg, #000 90%, transparent);
    mask-image: linear-gradient(90deg, #000 90%, transparent);
}

.tab button {
    width: 16px;
    height: 16px;
    color: #fff;
}

.new-tab {
    width: 38px;
    height: 20px;
    margin-top: 10px;
    border-left: 1px solid #5a5a5a;
}

.win-buttons {
    display: flex;
    margin-left: auto;
}

.win-buttons button {
    width: 46px;
}

.navbar {
    display: flex;
    align-items: center;
    height: 40px;
    padding: 0 4px 0 2px;
}

.navbar button {
    width: 36px;
    height: 32px;
    margin-right: 1px;
}

.address {
    flex: 1;
    display: flex;
    align-items: center;
    height: 32px;
    margin: 0 2px 0 0;
    padding: 0 6px 0 8px;
    border: 1px solid #6b6b6b;
    border-radius: 16px;
    background: #313131;
}

.url {
    flex: 1;
    margin-left: 8px;
    font-size: 13px;
    color: #d8d8d8;
    white-space: nowrap;
}

.url b {
    font-weight: 400;
    color: #fff;
}

.address .dim {
    margin-left: 12px;
    stroke: #9a9a9a;
}

.navbar .favs {
    border-left: 1px solid #5a5a5a;
    height: 20px;
    width: 40px;
}

.navbar .profile, .navbar .more {
    width: 34px;
}

.profile span {
    width: 24px;
    height: 24px;
    border-radius: 12px;
    background: #fff;
    color: #000;
    font: 18px/23px "Noto Sans CJK TC", sans-serif;
    text-align: center;
}

.browser .dots {
    fill: #e6e6e6;
    stroke: none;
}

.navbar .chat {
    width: 70px;
    height: 32px;
    gap: 7px;
    margin-left: 3px;
    border-radius: 16px;
    background: #1c1c1c;
}

.bookmarks {
    display: flex;
    align-items: center;
    height: 32px;
    padding-left: 12px;
}

.bookmarks i {
    width: 1px;
    height: 16px;
    margin: 0 14px;
    background: #5a5a5a;
}

.bookmarks a {
    display: flex;
    align-items: center;
    gap: 6px;
    padding-right: 19px;
    white-space: nowrap;
}

.bookmarks a.long {
    width: 154px;
    padding: 0;
}

.bookmarks a svg {
    width: 16px;
    height: 16px;
}

.bookmarks .overflow {
    margin: 0 29px 0 auto;
}

/* ---- page frame ---- */
.page {
    flex: 1;
    display: flex;
    min-height: 0;
    margin: 0 4px 5px;
    border-radius: 8px;
    overflow: hidden;
    background: #fff;
}

.sidebar {
    width: 100px;
    flex: none;
    display: flex;
    flex-direction: column;
    padding-top: 18px;
    background: linear-gradient(#2d47bf, #633fd3);
    color: #d2d3f2;
    font: 700 12px/18px Inter, sans-serif;
    text-align: center;
}

.sidebar a {
    position: relative;
    display: flex;
    flex-direction: column;
    align-items: center;
    padding-top: 6px;
    gap: 8px;
}

.sidebar svg {
    width: 18px;
    height: 18px;
    fill: #d2d3f2;
}

.side-main {
    display: grid;
    grid-auto-rows: 61px 62px;
}

.sidebar em {
    position: absolute;
    top: 2px;
    left: 42px;
    width: 22px;
    height: 18px;
    border-radius: 9px;
    background: #bf4630;
    color: #fff;
    font-style: normal;
}

.side-more a {
    height: 62px;
}

.side-more .two {
    height: 80px;
}

.side-more .create {
    height: 81px;
    padding-top: 8px;
    gap: 4px;
}

.side-more span {
    display: flex;
    align-items: center;
    justify-content: center;
    width: 30px;
    height: 30px;
    border-radius: 15px;
    background: #8177d6;
}

.sidebar hr {
    width: 60px;
    height: 2px;
    margin: 0 auto 21px;
    border: 0;
    background: #9087de;
}

.side-more .workspace {
    padding-top: 0;
    gap: 2px;
}

.side-more .workspace span {
    width: 36px;
    height: 36px;
    border: 1px solid #aaa3e6;
    border-radius: 8px;
}

.side-bottom {
    margin-top: auto;
    padding-bottom: 2px;
}

.side-bottom a {
    height: 44px;
}

/* ---- sheet header ---- */
.sheet {
    flex: 1;
    min-width: 0;
    display: flex;
    flex-direction: column;
}

.menubar {
    display: grid;
    grid-template-columns: 1fr auto 1fr;
    align-items: center;
    height: 62px;
    padding: 0 9px 0 27px;
}

.menubar nav {
    display: flex;
    gap: 21px;
    font-size: 15px;
}

.menubar nav .wide {
    padding-right: 9px;
}

.menubar h1 {
    display: flex;
    align-items: center;
    gap: 16px;
    margin: 0 54px 0 0;
    font-size: 19px;
    font-weight: 600;
}

.star {
    fill: none;
    stroke: #444;
    stroke-width: 1.8;
}

.menubar .share {
    justify-self: end;
    width: 108px;
    height: 44px;
    gap: 19px;
    padding-right: 4px;
    border-radius: 3px;
    background: #107e85;
    color: #fff;
    font-size: 15px;
    font-weight: 700;
}

.toolbar {
    display: flex;
    align-items: center;
    height: 46px;
    padding: 0 0 2px 6px;
    border-bottom: 1px solid #d2d2d2;
    font-size: 15px;
    font-weight: 500;
}

.toolbar > i {
    flex: none;
    width: 2px;
    height: 28px;
    margin: 0 10px;
    background: #ddd;
}

.toolbar button {
    width: 40px;
    height: 40px;
}

.toolbar svg, .rail svg {
    width: 18px;
    height: 18px;
    fill: none;
    stroke: #444;
    stroke-width: 1.5;
}

.toolbar .off svg {
    stroke: #c4c4c4;
}

.toolbar .caret {
    width: 7px;
    height: 7px;
    stroke: none;
}

.toolbar .dots {
    fill: #444;
    stroke: none;
}

.toolbar .view {
    width: 104px;
    gap: 12px;
}

.toolbar .filter {
    width: 84px;
    gap: 4px;
}

.toolbar label {
    display: flex;
    align-items: center;
    justify-content: center;
    gap: 16px;
}

.toolbar .font {
    width: 88px;
}

.toolbar .size {
    width: 68px;
}

.toolbar select {
    appearance: none;
    border: 0;
    padding: 0;
    background: none;
    color: inherit;
    font: inherit;
}

.toolbar .split svg {
    width: 22px;
    height: 22px;
    margin-top: 4px;
}

.toolbar .drop {
    width: 19px;
}

.toolbar .expand {
    margin-left: auto;
}

/* ---- grid ---- */
.work {
    position: relative;
    flex: 1;
    display: flex;
    min-height: 0;
}

.grid-wrap {
    flex: 1;
    min-width: 0;
    display: grid;
    grid-template-columns: 26px 1fr 16px;
    grid-template-rows: 1fr 15px;
    background: linear-gradient(90deg, #f8f7f6 26px, #fff 26px);
}

.row-tag {
    width: 18px;
    height: 28px;
    margin: 136px 0 0 8px;
    border-radius: 3px 0 0 3px;
    background: #6094d4;
}

.grid-scroll {
    overflow: hidden;
    min-height: 0;
}

table {
    width: 100%;
    table-layout: fixed;
    border-collapse: separate;
    border-spacing: 0;
    font: 15px/20px "Liberation Sans", Arial, sans-serif;
    color: #000;
}

.c-num { width: 73px; }
.c-main { width: 208px; }
.c-xn { width: 259px; }
.c-xt, .c-mn { width: 165px; }
.c-mt { width: 345px; }
.c-an { width: 266px; }

th {
    height: 55px;
    padding: 14px 10px 0;
    border-bottom: 2px solid #4c639f;
    background: linear-gradient(#e2e2e2, #e2e2e2) right 13px / 1px 100% no-repeat #f8f7f6;
    color: #444;
    font: 600 14px/20px Inter, sans-serif;
    text-align: left;
    vertical-align: top;
}

th:first-child, th:last-child {
    background: #f8f7f6;
}

th.sel {
    border-bottom: 4px solid #6094d4;
}

th span {
    display: block;
    font: 700 10px/14px "Liberation Sans", sans-serif;
    padding-left: 2px;
    color: #666;
}

th span i {
    font: italic 700 17px/14px "Liberation Serif", serif;
}

td {
    height: 27px;
    padding: 0 0 4px 6px;
    border-right: 1px solid #e8e8e8;
    border-bottom: 1px solid #ddd;
    overflow: hidden;
    text-overflow: clip;
    white-space: nowrap;
    line-height: 18px;
}

tr:nth-child(even) td {
    height: 28px;
}

td:nth-child(4) {
    padding-right: 6px;
    overflow: clip;
    overflow-clip-margin: content-box;
}

td:last-child {
    border-right: 0;
}

td:first-child {
    padding: 3px 27px 0 0;
    border-right: 0;
    color: #999;
    font: 14px/18px Inter, sans-serif;
    text-align: right;
}

/* blue marker for linked content */
td:nth-child(2) {
    padding-left: 0;
    background: radial-gradient(circle at 100% 50%, #2d6fe0 2px, transparent 4px);
}

td.cut {
    text-indent: -4px;
}

.current td {
    background-color: #edf2fb;
}

.current td:first-child {
    padding-right: 5px;
    color: #222;
    font-weight: 700;
}

.current td:first-child::after {
    content: "⋮";
    margin-left: 8px;
}

.vbar {
    display: flex;
    flex-direction: column;
    align-items: center;
    justify-content: space-between;
    padding: 55px 4px 4px 2px;
    background: linear-gradient(#f8f7f6 53px, #4c639f 53px, #4c639f 55px, #fff 55px);
    color: #9a9a9a;
}

.vbar span {
    width: 9px;
    height: 104px;
    border-radius: 5px;
    background: #9a9a9a;
}

.hbar {
    grid-column: 2 / 4;
    display: flex;
    align-items: center;
    padding: 0 21px 0 78px;
    background: linear-gradient(90deg, #f8f7f6 73px, #fff 73px);
    fill: #9a9a9a;
}

.track {
    flex: 1;
    padding: 0 32% 0 34%;
    margin: 0 -1px 0 -6px;
}

.track span {
    display: block;
    height: 9px;
    border-radius: 5px;
    background: #9e9e9e;
}

.editor {
    position: absolute;
    top: 55px;
    right: 4px;
    left: 730px;
    height: 54px;
    padding: 1px 2px;
    border: 2px solid #6094d4;
    border-radius: 2px;
    background: #fff;
    box-shadow: 0 3px 8px rgba(0, 0, 0, 0.2);
    color: #111;
    font: 15px/21px "Liberation Sans", Arial, sans-serif;
}

.editor u {
    text-decoration: underline double #3a48f0 1px;
    text-underline-offset: 3px;
    text-decoration-skip-ink: none;
}

.rail {
    flex: none;
    width: 58px;
    display: grid;
    grid-auto-rows: 53px 53px 52px;
    padding-top: 2px;
    border-left: 1px solid #ddd;
    background: #fff;
}

.rail svg {
    width: 22px;
    height: 22px;
}

.rail .fill {
    fill: #444;
    stroke: none;
    width: 24px;
    height: 24px;
}

/* ---- taskbar ---- */
.taskbar {
    flex: none;
    display: grid;
    grid-template-columns: 1fr auto 1fr;
    align-items: center;
    height: 47px;
    padding-bottom: 2px;
    background: #1c1c1c;
    color: #fff;
    font: 12px/16px "Open Sans", sans-serif;
}

.weather {
    position: relative;
    justify-self: start;
    margin-left: 20px;
    gap: 4px;
    text-align: left;
}

.weather small {
    display: block;
    font-size: 12px;
    color: #c0c0c0;
}

.taskbar em {
    position: absolute;
    top: -2px;
    left: 10px;
    width: 16px;
    height: 16px;
    border-radius: 8px;
    background: #ff99a4;
    color: #000;
    font-style: normal;
    text-align: center;
}

.apps {
    display: flex;
    align-items: center;
    padding-left: 2px;
}

.apps button {
    position: relative;
    width: 36px;
    height: 40px;
    margin: 0 4px;
    border-radius: 4px;
}

.apps .active {
    background: #2d2d2d;
    box-shadow: 4px 0 0 -1px #262626;
}

.running::after {
    content: "";
    position: absolute;
    bottom: 1px;
    width: 6px;
    height: 3px;
    border-radius: 2px;
    background: #9a9a9a;
}

.running.active::after {
    width: 16px;
    background: #4cc2ff;
}

.apps .running em {
    left: 20px;
    top: 3px;
    background: #c42b1c;
    color: #fff;
}

.search {
    display: flex;
    align-items: center;
    width: 220px;
    height: 32px;
    margin: 0 2px;
    padding: 0 15px 0 11px;
    border: 1px solid #545454;
    border-radius: 16px;
    background: #3a3a3a;
    fill: none;
    stroke: #ddd;
    stroke-width: 1.5;
}

.search input {
    flex: 1;
    min-width: 0;
    margin-left: 8px;
    padding: 0;
    border: 0;
    outline: 0;
    background: none;
    color: #fff;
    font: 13px/20px "Open Sans", sans-serif;
}

.search input::placeholder {
    color: #cfcfcf;
}

.flag {
    stroke: none;
}

.tray {
    justify-self: end;
    display: flex;
    align-items: center;
    gap: 8px;
    margin-right: 20px;
    text-align: right;
}
```
